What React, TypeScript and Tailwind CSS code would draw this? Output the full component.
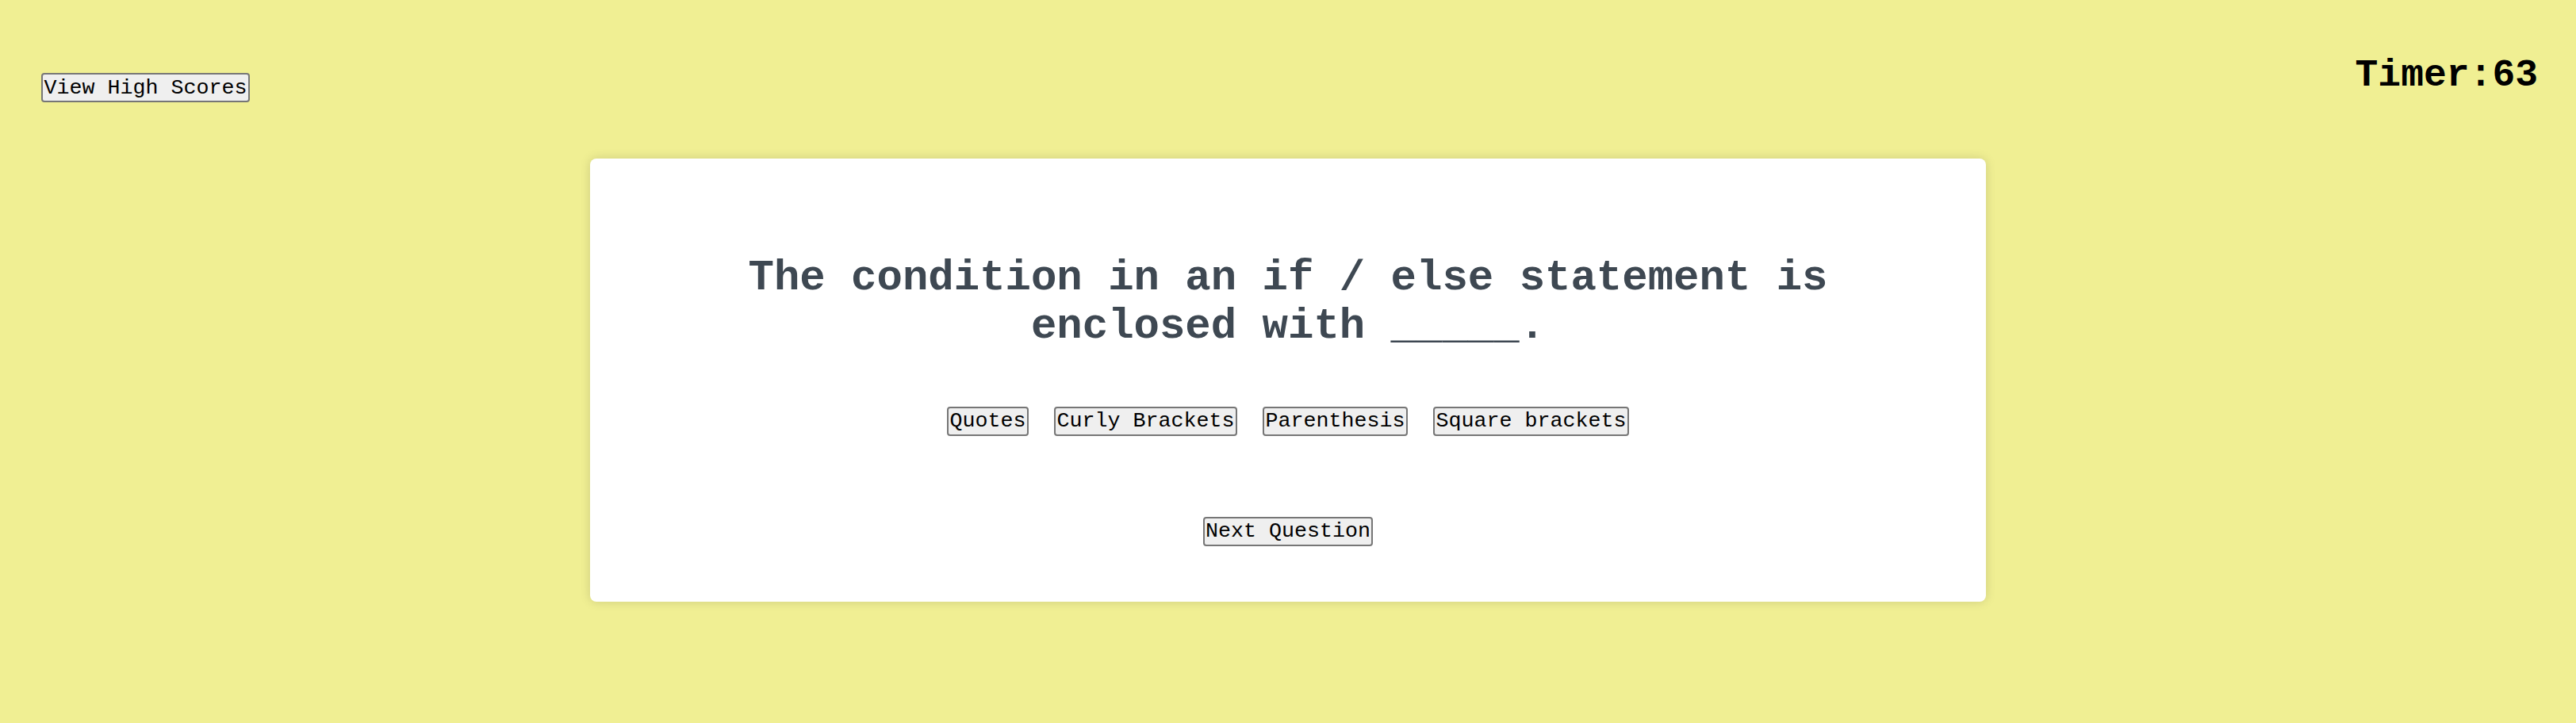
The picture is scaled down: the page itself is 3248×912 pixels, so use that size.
import React from "react";

const btn =
  "bg-[#efefef] border-2 border-[#767676] rounded-[4px] px-[1.5px] py-[1.5px] text-[26.67px] leading-[1.133] text-black [font-family:'Courier_New','Liberation_Mono',monospace] cursor-default";

export default function App() {
  const answers = ["Quotes", "Curly Brackets", "Parenthesis", "Square brackets"];
  return (
    <div className="min-h-[912px] w-full bg-[#f0ef93] [font-family:'Courier_New','Liberation_Mono',monospace]">
      <header className="flex items-start justify-between pl-[52px] pr-[48px] pt-[68px]">
        <button className={`${btn} mt-[24px]`}>View High Scores</button>
        <div className="text-[48px] font-bold leading-[1.133] text-black">Timer:63</div>
      </header>
      <main className="mx-auto mt-[71px] w-[1760px] rounded-[8px] bg-white pt-[120px] pb-[70px] shadow-[0_0_14px_rgba(0,0,0,0.14)]">
        <h1 className="mx-auto max-w-[1500px] text-center text-[54px] font-bold leading-[1.133] text-[#3e4852]">
          The condition in an if / else statement is enclosed with _____.
        </h1>
        <div className="mt-[70px] flex justify-center gap-[32px]">
          {answers.map((a) => (
            <button key={a} className={btn}>
              {a}
            </button>
          ))}
        </div>
        <div className="mt-[102px] flex justify-center">
          <button className={btn}>Next Question</button>
        </div>
      </main>
    </div>
  );
}
